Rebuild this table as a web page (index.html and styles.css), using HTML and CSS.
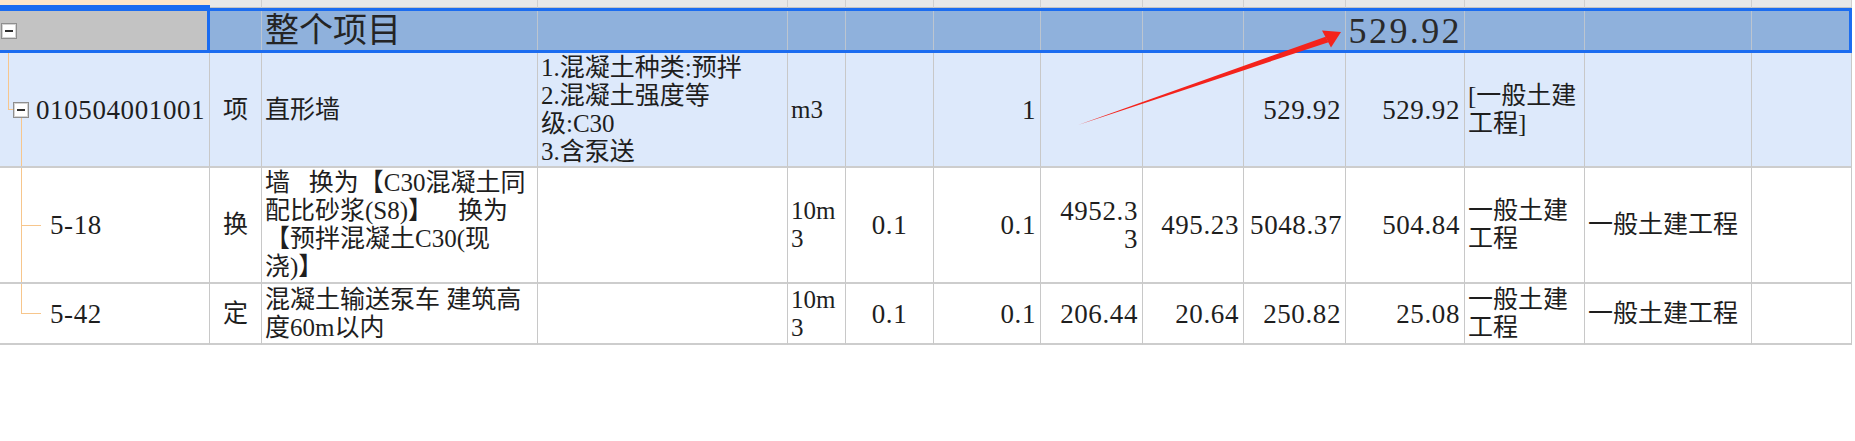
FILE: index.html
```html
<!DOCTYPE html>
<html lang="zh-CN">
<head>
<meta charset="utf-8">
<title>整个项目</title>
<link rel="stylesheet" href="styles.css">
</head>
<body>
<div class="sheet">
  <div class="row head">
    <div class="cell first"></div>
    <div class="cell"></div><div class="cell"></div><div class="cell"></div><div class="cell"></div>
    <div class="cell"></div><div class="cell"></div><div class="cell"></div><div class="cell"></div>
    <div class="cell"></div><div class="cell"></div><div class="cell"></div><div class="cell"></div>
    <div class="cell"></div>
  </div>

  <div class="row sel">
    <div class="cell first tree t-root"><span class="toggle"></span></div>
    <div class="cell"></div>
    <div class="cell left title">整个项目</div>
    <div class="cell"></div>
    <div class="cell"></div>
    <div class="cell"></div>
    <div class="cell"></div>
    <div class="cell"></div>
    <div class="cell"></div>
    <div class="cell"></div>
    <div class="cell right total">529.92</div>
    <div class="cell"></div>
    <div class="cell"></div>
    <div class="cell"></div>
  </div>

  <div class="row item">
    <div class="cell tree t-item"><span class="toggle"></span><span class="code num">010504001001</span></div>
    <div class="cell center">项</div>
    <div class="cell left">直形墙</div>
    <div class="cell left multi">1.混凝土种类:预拌<br>2.混凝土强度等<br>级:C30<br>3.含泵送</div>
    <div class="cell left">m3</div>
    <div class="cell"></div>
    <div class="cell right num">1</div>
    <div class="cell"></div>
    <div class="cell"></div>
    <div class="cell right num">529.92</div>
    <div class="cell right num">529.92</div>
    <div class="cell left multi">[一般土建<br>工程]</div>
    <div class="cell"></div>
    <div class="cell"></div>
  </div>

  <div class="row sub r3">
    <div class="cell tree t-mid"><span class="code num">5-18</span></div>
    <div class="cell center">换</div>
    <div class="cell left multi">墙&nbsp;&nbsp;&nbsp;换为【C30混凝土同<br>配比砂浆(S8)】&nbsp;&nbsp;&nbsp;&nbsp;换为<br>【预拌混凝土C30(现<br>浇)】</div>
    <div class="cell"></div>
    <div class="cell left multi">10m<br>3</div>
    <div class="cell center num">0.1</div>
    <div class="cell right num">0.1</div>
    <div class="cell right multi num">4952.3<br>3</div>
    <div class="cell right num">495.23</div>
    <div class="cell right num tight">5048.37</div>
    <div class="cell right num">504.84</div>
    <div class="cell left multi">一般土建<br>工程</div>
    <div class="cell left">一般土建工程</div>
    <div class="cell"></div>
  </div>

  <div class="row sub r4">
    <div class="cell tree t-last"><span class="code num">5-42</span></div>
    <div class="cell center">定</div>
    <div class="cell left multi">混凝土输送泵车&nbsp;建筑高<br>度60m以内</div>
    <div class="cell"></div>
    <div class="cell left multi">10m<br>3</div>
    <div class="cell center num">0.1</div>
    <div class="cell right num">0.1</div>
    <div class="cell right num">206.44</div>
    <div class="cell right num">20.64</div>
    <div class="cell right num">250.82</div>
    <div class="cell right num">25.08</div>
    <div class="cell left multi">一般土建<br>工程</div>
    <div class="cell left">一般土建工程</div>
    <div class="cell"></div>
  </div>
</div>

<svg class="arrow" width="1855" height="441" viewBox="0 0 1855 441" aria-hidden="true">
  <polygon points="1078,125 1325.5,36.8 1328.5,42.2" fill="#f4231c"/>
  <polygon points="1341,32 1322,30.5 1331,47.5" fill="#f4231c"/>
</svg>
</body>
</html>
```

FILE: styles.css
```css
html, body {
  margin: 0;
  padding: 0;
  background: #ffffff;
}

body {
  position: relative;
  width: 1855px;
  height: 441px;
  overflow: hidden;
  font-family: "Liberation Serif", "Noto Sans CJK SC", serif;
  font-size: 25px;
  color: #1e1e1e;
}

.sheet {
  width: 1852px;
}

.row {
  display: grid;
  grid-template-columns: 210px 52px 276px 250px 58px 88px 107px 102px 101px 102px 119px 120px 167px 100px;
}

.cell {
  box-sizing: border-box;
  display: flex;
  align-items: center;
  min-width: 0;
  border-right: 1px solid #c8c8c8;
  border-bottom: 2px solid #cdcdcd;
  padding: 0 3px;
  white-space: nowrap;
  line-height: 28px;
}

.left { justify-content: flex-start; }
.center { justify-content: center; }
.right { justify-content: flex-end; text-align: right; padding-right: 4px; }
.multi { white-space: nowrap; }

.num {
  font-size: 27px;
  letter-spacing: 0.6px;
}
.tight {
  padding-right: 3px;
  padding-left: 0;
}

/* header strip */
.head {
  height: 8px;
}
.head .cell {
  background: #e8e8e8;
  border-bottom: 1px solid #c4c4c4;
  border-right-color: #cfcfcf;
}
.head .cell.first {
  background: #fde6c9;
  border-bottom: 3px solid #1b6cf0;
  border-right: 0;
}

/* selected row */
.sel {
  position: relative;
  height: 45px;
}
.sel::after {
  content: "";
  position: absolute;
  inset: 0;
  border: 3px solid #1b6cf0;
  border-left: 0;
  pointer-events: none;
}
.sel .cell {
  background: #8fb1dc;
  border-right-color: #bcc5d0;
  border-bottom: 0;
}
.sel .cell.first {
  background: #c3c3c3;
  border-right: 3px solid #1b6cf0;
}
.title {
  font-size: 34px;
  line-height: 1;
  color: #242424;
}
.total {
  font-size: 36px;
  letter-spacing: 2.4px;
  line-height: 1;
  color: #2a2a2a;
  padding-right: 2px;
}

.item {
  height: 115px;
}
.item .cell {
  background: #dde9fb;
}
.r3 {
  height: 116px;
}
.r4 {
  height: 61px;
}

/* tree column */
.tree {
  padding-left: 1px;
  background-repeat: no-repeat;
}
.toggle {
  box-sizing: border-box;
  width: 16px;
  height: 16px;
  flex: none;
  border: 1px solid #8e8e8e;
  box-shadow: inset 0 0 0 1px #d4d4d4;
  background: #ffffff;
  display: flex;
  align-items: center;
  justify-content: center;
}
.toggle::before {
  content: "";
  width: 8px;
  height: 2px;
  background: #303030;
}
.sel .t-root {
  background-color: #c3c3c3;
  background-image: linear-gradient(#f7c68c, #f7c68c);
  background-position: 8px 100%;
  background-size: 1px 50%;
  background-repeat: no-repeat;
}
.item .t-item {
  padding-left: 13px;
  background-color: #dde9fb;
  background-image:
    linear-gradient(#f7c68c, #f7c68c),
    linear-gradient(#f7c68c, #f7c68c),
    linear-gradient(#f7c68c, #f7c68c);
  background-position: 8px 0, 8px 50%, 21px 100%;
  background-size: 1px 50%, 6px 1px, 1px 50%;
  background-repeat: no-repeat;
}
.t-item .code {
  margin-left: 7px;
}
.t-mid {
  padding-left: 50px;
  background-image:
    linear-gradient(#f7c68c, #f7c68c),
    linear-gradient(#f7c68c, #f7c68c);
  background-position: 21px 0, 21px 50%;
  background-size: 1px 100%, 20px 1px;
}
.t-last {
  padding-left: 50px;
  background-image:
    linear-gradient(#f7c68c, #f7c68c),
    linear-gradient(#f7c68c, #f7c68c);
  background-position: 21px 0, 21px 50%;
  background-size: 1px 50%, 20px 1px;
}

.arrow {
  position: absolute;
  left: 0;
  top: 0;
  pointer-events: none;
}
```
